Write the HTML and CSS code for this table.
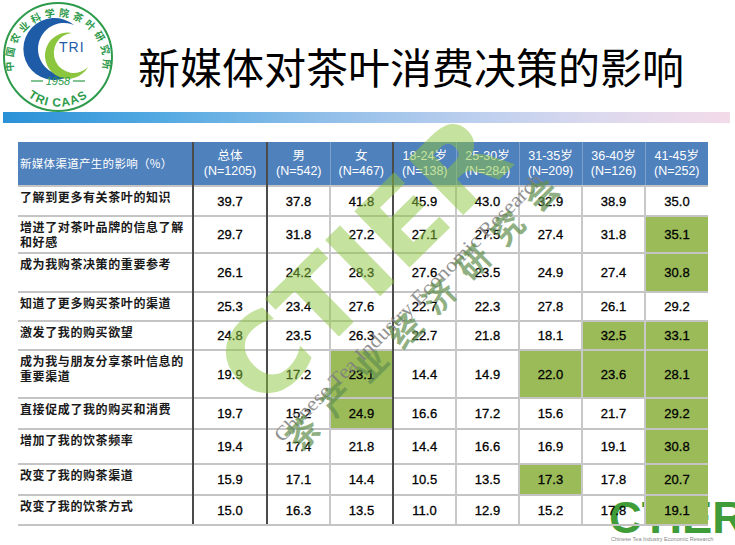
FILE: index.html
```html
<!DOCTYPE html>
<html lang="zh-CN">
<head>
<meta charset="utf-8">
<title>新媒体对茶叶消费决策的影响</title>
<link rel="stylesheet" href="styles.css">
</head>
<body>
<div class="slide">
  <header class="top">
    <svg class="emblem" viewBox="0 0 112 112" width="112" height="112">
      <defs>
        <path id="arcTop" d="M 12 70 A 45 45 0 1 1 100 70"/>
        <path id="arcBot" d="M 22 92 A 49 49 0 0 0 90 92"/>
      </defs>
      <circle class="em-ring" cx="56" cy="56" r="54"/>
      <text class="em-arc"><textPath href="#arcTop" textLength="158" lengthAdjust="spacing">中国农业科学院茶叶研究所</textPath></text>
      <path class="em-blue" d="M72 24 A31 31 0 1 0 72 72 A26 26 0 1 1 72 24 Z"/>
      <path class="em-green" d="M70 32 A23 23 0 1 0 86 66 A20 20 0 1 1 70 32 Z"/>
      <text class="em-tri" x="57" y="51">TRI</text>
      <line class="em-dash" x1="29" y1="80" x2="41" y2="80"/>
      <line class="em-dash" x1="71" y1="80" x2="83" y2="80"/>
      <text class="em-year" x="56" y="84">1958</text>
      <text class="em-caas"><textPath href="#arcBot" startOffset="50%">TRI CAAS</textPath></text>
    </svg>
    <h1 class="title">新媒体对茶叶消费决策的影响</h1>
  </header>
  <div class="bar"></div>

  <div class="table-wrap">
    <table class="data">
      <colgroup>
        <col class="c-label"><col class="c-total"><col class="c-n"><col class="c-n"><col class="c-w"><col class="c-n"><col class="c-n"><col class="c-n"><col class="c-n">
      </colgroup>
      <thead>
        <tr>
          <th class="head-label">新媒体渠道产生的影响（%）</th>
          <th class="sep">总体<br>(N=1205)</th>
          <th class="sep">男<br>(N=542)</th>
          <th>女<br>(N=467)</th>
          <th class="sep">18-24岁<br>(N=138)</th>
          <th>25-30岁<br>(N=284)</th>
          <th>31-35岁<br>(N=209)</th>
          <th>36-40岁<br>(N=126)</th>
          <th>41-45岁<br>(N=252)</th>
        </tr>
      </thead>
      <tbody>
        <tr>
          <td class="label">了解到更多有关茶叶的知识</td>
          <td class="sep">39.7</td><td class="sep">37.8</td><td>41.8</td><td class="sep">45.9</td><td>43.0</td><td>32.9</td><td>38.9</td><td>35.0</td>
        </tr>
        <tr>
          <td class="label">增进了对茶叶品牌的信息了解<br>和好感</td>
          <td class="sep">29.7</td><td class="sep">31.8</td><td>27.2</td><td class="sep">27.1</td><td>27.5</td><td>27.4</td><td>31.8</td><td class="hi">35.1</td>
        </tr>
        <tr>
          <td class="label">成为我购茶决策的重要参考</td>
          <td class="sep">26.1</td><td class="sep">24.2</td><td>28.3</td><td class="sep">27.6</td><td>23.5</td><td>24.9</td><td>27.4</td><td class="hi">30.8</td>
        </tr>
        <tr>
          <td class="label">知道了更多购买茶叶的渠道</td>
          <td class="sep">25.3</td><td class="sep">23.4</td><td>27.6</td><td class="sep">22.7</td><td>22.3</td><td>27.8</td><td>26.1</td><td>29.2</td>
        </tr>
        <tr>
          <td class="label">激发了我的购买欲望</td>
          <td class="sep">24.8</td><td class="sep">23.5</td><td>26.3</td><td class="sep">22.7</td><td>21.8</td><td>18.1</td><td class="hi">32.5</td><td class="hi">33.1</td>
        </tr>
        <tr>
          <td class="label">成为我与朋友分享茶叶信息的<br>重要渠道</td>
          <td class="sep">19.9</td><td class="sep">17.2</td><td class="hi">23.1</td><td class="sep">14.4</td><td>14.9</td><td class="hi">22.0</td><td class="hi">23.6</td><td class="hi">28.1</td>
        </tr>
        <tr>
          <td class="label">直接促成了我的购买和消费</td>
          <td class="sep">19.7</td><td class="sep">15.2</td><td class="hi">24.9</td><td class="sep">16.6</td><td>17.2</td><td>15.6</td><td>21.7</td><td class="hi">29.2</td>
        </tr>
        <tr>
          <td class="label">增加了我的饮茶频率</td>
          <td class="sep">19.4</td><td class="sep">17.4</td><td>21.8</td><td class="sep">14.4</td><td>16.6</td><td>16.9</td><td>19.1</td><td class="hi">30.8</td>
        </tr>
        <tr>
          <td class="label">改变了我的购茶渠道</td>
          <td class="sep">15.9</td><td class="sep">17.1</td><td>14.4</td><td class="sep">10.5</td><td>13.5</td><td class="hi">17.3</td><td>17.8</td><td class="hi">20.7</td>
        </tr>
        <tr>
          <td class="label">改变了我的饮茶方式</td>
          <td class="sep">15.0</td><td class="sep">16.3</td><td>13.5</td><td class="sep">11.0</td><td>12.9</td><td>15.2</td><td>17.8</td><td class="hi">19.1</td>
        </tr>
      </tbody>
    </table>
  </div>

  <svg class="corner-logo" viewBox="0 0 130 48" width="130" height="48">
    <text class="cl-word" x="0" y="36" textLength="136" lengthAdjust="spacingAndGlyphs">CTIER</text>
    <text class="cl-sub" x="2" y="44">Chinese Tea Industry Economic Research</text>
  </svg>

  <svg class="watermark" viewBox="0 0 735 545" width="735" height="545">
    <text class="wm-logo" transform="translate(262 412) rotate(-44.4)" textLength="356" lengthAdjust="spacingAndGlyphs">CTIER</text>
    <text class="wm-en" transform="translate(282 443) rotate(-45)" textLength="370" lengthAdjust="spacingAndGlyphs">Chinese Tea Industry Economic Research</text>
    <text class="wm-cn" transform="translate(300 453) rotate(-45)" textLength="370" lengthAdjust="spacing">茶产业经济研究会</text>
  </svg>
</div>
</body>
</html>
```

FILE: styles.css
```css
html, body {
  margin: 0;
  padding: 0;
  background: #fff;
}

body {
  font-family: "Liberation Sans", Arial, "Noto Sans CJK SC", sans-serif;
  color: #000;
}

.slide {
  position: relative;
  width: 735px;
  height: 545px;
  overflow: hidden;
  background: #fff;
}

/* ---------- header ---------- */
.top {
  display: flex;
  align-items: flex-start;
  height: 112px;
}

.emblem {
  flex: none;
  width: 112px;
  height: 112px;
  margin: 1px 0 0 2px;
}

.em-ring {
  fill: #fff;
  stroke: #2e9b4c;
  stroke-width: 2;
}

.em-arc {
  font-family: "Noto Sans CJK SC", sans-serif;
  font-weight: 700;
  font-size: 10px;
  fill: #2e9b4c;
}

.em-blue {
  fill: #1f5ca8;
}

.em-green {
  fill: #8cc63f;
}

.em-tri {
  font-family: "Liberation Sans", sans-serif;
  font-size: 14px;
  letter-spacing: 1px;
  fill: #1f5ca8;
}

.em-dash {
  stroke: #2e9b4c;
  stroke-width: 1.2;
}

.em-year {
  font-family: "Liberation Sans", sans-serif;
  font-style: italic;
  font-size: 11px;
  fill: #2e9b4c;
  text-anchor: middle;
}

.em-caas {
  font-family: "Liberation Sans", sans-serif;
  font-weight: 700;
  font-size: 12px;
  letter-spacing: 1px;
  fill: #2e9b4c;
  text-anchor: middle;
}

.title {
  margin: 45px 0 0 24px;
  font-family: "Noto Sans CJK SC", sans-serif;
  font-weight: 400;
  font-size: 42px;
  line-height: 42px;
  color: #000;
  white-space: nowrap;
}

.bar {
  margin-left: 3px;
  width: 727px;
  height: 11px;
  background: linear-gradient(90deg, #2a91d7 0%, #55aae2 22%, #92bfe9 45%, #bccfee 65%, #dcd9ee 82%, #f3dbe9 100%);
}

/* ---------- table ---------- */
.table-wrap {
  position: relative;
  z-index: 1;
  margin: 19px 0 0 18px;
}

.data {
  border-collapse: collapse;
  table-layout: fixed;
  width: 690px;
}

.c-label { width: 175px; }
.c-total { width: 74px; }
.c-n { width: 63px; }
.c-w { width: 63px; }

.data th {
  height: 43px;
  padding: 0;
  background: #4f81bd;
  color: #fff;
  font-weight: 400;
  font-size: 12.5px;
  line-height: 15px;
  text-align: center;
  vertical-align: middle;
  border-left: 1px solid #7d9fcc;
}

.data th.head-label {
  text-align: left;
  padding-left: 2px;
  font-family: "Noto Sans CJK SC", sans-serif;
  font-size: 11.5px;
  letter-spacing: 0.3px;
  border-left: none;
}

.data td {
  padding: 0;
  font-size: 13px;
  color: #000;
  text-align: center;
  vertical-align: middle;
  border-top: 2px solid #c4c4c4;
  border-left: 2px solid #c8c8c8;
  -webkit-text-stroke: 0.3px #000;
}

.data tbody tr:last-child td {
  border-bottom: 2px solid #c4c4c4;
}

.data td.label {
  text-align: left;
  vertical-align: top;
  padding: 2px 0 0 2px;
  font-family: "Noto Sans CJK SC", sans-serif;
  font-weight: 700;
  font-size: 12px;
  letter-spacing: 0.6px;
  line-height: 15px;
  color: #1a1a1a;
  border-left: none;
  -webkit-text-stroke: 0;
}

.data th.sep,
.data td.sep {
  border-left: 2px solid #4b4b4b;
}

.data td.hi {
  background: #9bbb59;
}

.data tbody tr:nth-child(1) { height: 30px; }
.data tbody tr:nth-child(2) { height: 37px; }
.data tbody tr:nth-child(3) { height: 39px; }
.data tbody tr:nth-child(4) { height: 29px; }
.data tbody tr:nth-child(5) { height: 29px; }
.data tbody tr:nth-child(6) { height: 48px; }
.data tbody tr:nth-child(7) { height: 31px; }
.data tbody tr:nth-child(8) { height: 35px; }
.data tbody tr:nth-child(9) { height: 31px; }
.data tbody tr:nth-child(10) { height: 30px; }

/* ---------- corner logo (behind table) ---------- */
.corner-logo {
  position: absolute;
  left: 609px;
  top: 497px;
  z-index: 0;
}

.cl-word {
  font-family: "Liberation Sans", sans-serif;
  font-weight: 700;
  font-size: 44px;
  fill: #3f9c38;
}

.cl-sub {
  font-family: "Liberation Sans", sans-serif;
  font-size: 5.5px;
  fill: #888;
}

/* ---------- watermark (over everything) ---------- */
.watermark {
  position: absolute;
  left: 0;
  top: 0;
  z-index: 3;
  pointer-events: none;
}

.wm-logo {
  font-family: "DejaVu Sans", sans-serif;
  font-weight: 700;
  font-size: 108px;
  fill: #8dc63f;
  opacity: 0.5;
}

.wm-en {
  font-family: "Liberation Serif", serif;
  font-size: 20px;
  fill: #7f7f7f;
  opacity: 0.85;
}

.wm-cn {
  font-family: "Noto Sans CJK SC", sans-serif;
  font-weight: 700;
  font-size: 32px;
  fill: #62904f;
  opacity: 0.7;
}
```
